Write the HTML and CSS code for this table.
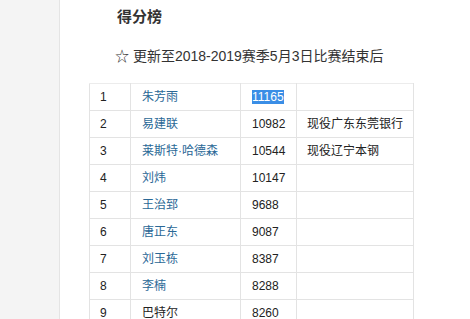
FILE: index.html
```html
<!DOCTYPE html>
<html>
<head>
<meta charset="utf-8">
<link rel="stylesheet" href="styles.css">
</head>
<body>
<div class="page">
  <aside class="side"></aside>
  <main class="main">
    <h3 class="title">得分榜</h3>
    <p class="sub">☆ 更新至2018-2019赛季5月3日比赛结束后</p>
    <table class="rank">
      <tr><td class="c1">1</td><td class="c2 link">朱芳雨</td><td class="c3"><span class="sel">11165</span></td><td class="c4"></td></tr>
      <tr><td class="c1">2</td><td class="c2 link">易建联</td><td class="c3">10982</td><td class="c4">现役广东东莞银行</td></tr>
      <tr><td class="c1">3</td><td class="c2 link">莱斯特·哈德森</td><td class="c3">10544</td><td class="c4">现役辽宁本钢</td></tr>
      <tr><td class="c1">4</td><td class="c2 link">刘炜</td><td class="c3">10147</td><td class="c4"></td></tr>
      <tr><td class="c1">5</td><td class="c2 link">王治郅</td><td class="c3">9688</td><td class="c4"></td></tr>
      <tr><td class="c1">6</td><td class="c2 link">唐正东</td><td class="c3">9087</td><td class="c4"></td></tr>
      <tr><td class="c1">7</td><td class="c2 link">刘玉栋</td><td class="c3">8387</td><td class="c4"></td></tr>
      <tr><td class="c1">8</td><td class="c2 link">李楠</td><td class="c3">8288</td><td class="c4"></td></tr>
      <tr><td class="c1">9</td><td class="c2">巴特尔</td><td class="c3">8260</td><td class="c4"></td></tr>
    </table>
  </main>
</div>
</body>
</html>
```
FILE: styles.css
```css
html, body {
  margin: 0;
  padding: 0;
  background: #ffffff;
  overflow: hidden;
}
body {
  font-family: "Liberation Sans", Arial, "Noto Sans CJK SC", sans-serif;
  color: #222;
}
.page {
  display: flex;
  height: 319px;
}
.side {
  width: 59px;
  flex: none;
  background: #f4f4f4;
  border-right: 1px solid #e4e4e4;
}
.main {
  flex: 1;
  padding-left: 29px;
}
.title {
  margin: 7px 0 0 28px;
  font-size: 15px;
  line-height: 20px;
  font-weight: bold;
  color: #333;
}
.sub {
  margin: 19px 0 0 26px;
  font-size: 14px;
  line-height: 20px;
  color: #333;
}
.rank {
  margin-top: 17px;
  border-collapse: collapse;
  font-size: 12px;
  color: #222;
}
.rank td {
  border: 1px solid #e3e3e3;
  height: 27px;
  padding: 0 0 0 10px;
  box-sizing: border-box;
  vertical-align: middle;
  line-height: 16px;
}
.rank tr:first-child td {
  border-top-color: #ececec;
}
.c1 { width: 41px; }
.c2 { width: 110px; padding-left: 11px !important; }
.c3 { width: 56px; padding-left: 11px !important; }
.c4 { width: 117px; padding-left: 10px !important; }
.link { color: #2a6896; }
.sel {
  background: #3a8ee6;
  color: #fff;
}
```
